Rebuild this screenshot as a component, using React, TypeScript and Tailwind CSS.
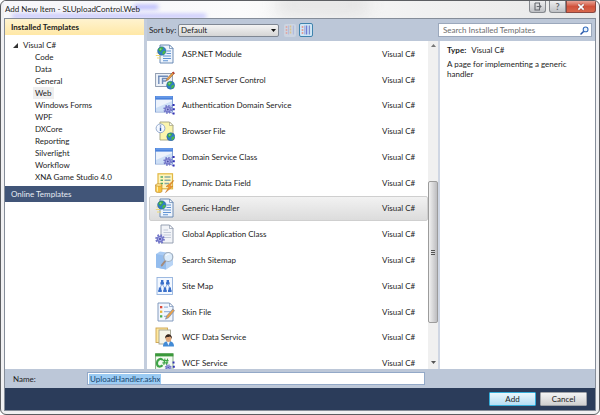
import type { ReactNode } from "react";

type IconKind =
  | "module" | "control" | "service" | "browser" | "field"
  | "app" | "search" | "sitemap" | "skin" | "data" | "wcf";

const templates: { name: string; icon: IconKind; selected?: boolean }[] = [
  { name: "ASP.NET Module", icon: "module" },
  { name: "ASP.NET Server Control", icon: "control" },
  { name: "Authentication Domain Service", icon: "service" },
  { name: "Browser File", icon: "browser" },
  { name: "Domain Service Class", icon: "service" },
  { name: "Dynamic Data Field", icon: "field" },
  { name: "Generic Handler", icon: "module", selected: true },
  { name: "Global Application Class", icon: "app" },
  { name: "Search Sitemap", icon: "search" },
  { name: "Site Map", icon: "sitemap" },
  { name: "Skin File", icon: "skin" },
  { name: "WCF Data Service", icon: "data" },
  { name: "WCF Service", icon: "wcf" },
];

const categories = [
  "Code", "Data", "General", "Web", "Windows Forms", "WPF", "DXCore",
  "Reporting", "Silverlight", "Workflow", "XNA Game Studio 4.0",
];

function Globe({ x, y, r = 4 }: { x: number; y: number; r?: number }) {
  return (
    <g transform={`translate(${x} ${y}) scale(${r / 4})`}>
      <circle r="4" fill="#2f7fc4" stroke="#2a5f96" strokeWidth=".5" />
      <path d="M-3.4-1.6C-2-4 1-4 1.4-2.6C1-1 0-1.2-.6.2C-1.4 1.6-3 .4-3.4-1.6Z" fill="#3fae3c" />
      <path d="M.8.6C2-.6 3.6-.4 3.6.8C3 2.6 1.6 3.6.6 3.2Z" fill="#4dbb45" />
      <circle cx="-1.2" cy="-1.6" r="1" fill="#c8f0d0" opacity=".5" />
    </g>
  );
}

function Page({ x = 5, fill = "#eef4fc", stroke = "#5c7fae" }: { x?: number; fill?: string; stroke?: string }) {
  return (
    <g>
      <path d={`M${x} 1H14.5L18 4.5V19H${x}Z`} fill={fill} stroke={stroke} strokeWidth=".9" />
      <path d="M14.5 1V4.5H18Z" fill="#fff" stroke={stroke} strokeWidth=".7" />
    </g>
  );
}

function Gear({ x, y, r = 4, fill = "#7377c8" }: { x: number; y: number; r?: number; fill?: string }) {
  return (
    <g transform={`translate(${x} ${y}) scale(${r / 4})`}>
      <circle r="3.7" fill="none" stroke={fill} strokeWidth="1.8" strokeDasharray="1.6 1.3" />
      <circle r="3.2" fill={fill} />
      <circle r="1.9" fill="#a9abe8" />
      <circle r="1" fill="#4c4fa4" />
    </g>
  );
}

const drawings: Record<IconKind, ReactNode> = {
  module: (
    <>
      <Page />
      <path d="M11.5 7H16M11.5 9.5H16M8 12H16M8 14.5H16M8 16.7H13" stroke="#5f92d2" strokeWidth="1.1" />
      <path d="M1.5 9H5M.8 11.5H5.5M2 14H6" stroke="#ecd974" strokeWidth="1.2" />
      <Globe x={6.8} y={7} r={4.2} />
    </>
  ),
  control: (
    <>
      <rect x=".6" y="3.5" width="16.8" height="13" fill="#eef2f8" stroke="#8794aa" strokeWidth=".9" />
      <path d="M3 6.2H13M3.8 6V14M7 8.5H12M7 11H11M7.5 8V14" stroke="#6f8bb8" strokeWidth="1.4" fill="none" />
      <path d="M11 11L12.2 8.3L18 2L19.4 3.4L13.6 9.6Z" fill="#e9a24a" stroke="#80502c" strokeWidth=".5" />
      <path d="M17.2 2.8L18.2 1.6L19.8 3L18.8 4.2Z" fill="#b53b35" />
      <Globe x={15.6} y={15.2} r={4} />
    </>
  ),
  service: (
    <>
      <rect x=".5" y="1.5" width="17" height="15.5" fill="#edf3fc" stroke="#7c9cd0" strokeWidth=".9" />
      <path d="M1 13L17 6V16.5H1Z" fill="#cddff6" />
      <rect x=".2" y="1" width="17.6" height="3.6" fill="#4a82dc" />
      <path d="M1 2H17" stroke="#8bb6f5" strokeWidth=".8" />
      <path d="M13 14.5H18.5M15 11.5L18.5 10M15 17L18.5 19" stroke="#8185c8" strokeWidth=".7" />
      <Gear x={12.8} y={14.4} r={3.9} />
      <path d="M17.6 9H19.6V11H17.6ZM17.8 13.3H19.8V15.3H17.8ZM17.6 17.6H19.6V19.6H17.6Z" fill="#3131b5" />
    </>
  ),
  browser: (
    <>
      <Page fill="#fbf5ad" stroke="#a2a17e" />
      <circle cx="5.5" cy="7.3" r="4.4" fill="#f5f9ff" stroke="#8aa2c8" strokeWidth=".9" />
      <path d="M5.5 6.5V10M5.5 4.4V5.5" stroke="#2857a8" strokeWidth="1.4" />
      <Globe x={15.8} y={15.7} r={4} />
    </>
  ),
  field: (
    <>
      <rect x="3" y=".8" width="14.5" height="15" fill="#fff5bd" stroke="#e2b743" strokeWidth="1.2" />
      <path d="M5.5 4H8M5.5 7.3H8M5.5 10.5H8" stroke="#4fa968" strokeWidth="1.6" />
      <path d="M9.5 4H15.5M9.5 7.3H15.5M9.5 10.5H14" stroke="#86aaa5" strokeWidth="1.6" />
      <path d="M18.8 7.4L11 13.6L14 14L10.5 19.6L17.6 13.4L15 12.8Z" fill="#f49a2f" stroke="#bd6b20" strokeWidth=".5" />
      <path d="M.6 12V18.3C.6 20 7 20 7 18.3V12Z" fill="#f6c03f" stroke="#bb8420" strokeWidth=".6" />
      <path d="M2.4 13V18.6" stroke="#fff0a6" strokeWidth="1.2" />
      <ellipse cx="3.8" cy="12" rx="3.2" ry="1.3" fill="#ffe795" stroke="#bb8420" strokeWidth=".6" />
    </>
  ),
  app: (
    <>
      <Page x={6} fill="#f2f4f8" stroke="#8c97aa" />
      <path d="M8.5 6H13M8.5 8.5H16M8.5 11H16M10 13.5H16" stroke="#c3cbd9" strokeWidth="1" />
      <Gear x={5} y={15} r={4.2} />
    </>
  ),
  search: (
    <>
      <path d="M1 4L5 1.5L15 3V16L11 19.5L1 17.5Z" fill="#a9cbf3" />
      <path d="M1 4L11 6V19.5L1 17.5Z" fill="#94bdee" />
      <path d="M11 6L18 3.5V15L11 19.5Z" fill="#b8d4f5" />
      <path d="M10.2 11L6.8 15.4" stroke="#a58b7c" strokeWidth="2" strokeLinecap="round" />
      <circle cx="13.3" cy="7" r="4.5" fill="#dcecfb" stroke="#a1aebd" strokeWidth="1.2" />
      <path d="M10.8 6C11.3 4.5 13 3.9 14.4 4.3" stroke="#fff" fill="none" />
    </>
  ),
  sitemap: (
    <>
      <rect x="2" y="1.5" width="15.5" height="17" fill="#f3f8ff" stroke="#93b2dd" strokeWidth=".9" />
      <path d="M7 8L5 12M7 8L9.7 12M12.7 8L10 12M12.7 8L15 12" stroke="#89a9dc" />
      <path d="M5.4 8.4V6.6L6 6V4H8.4V6L9 6.6V8.4ZM11 8.4V6.6L11.6 6V4H14V6L14.6 6.6V8.4ZM3.2 16V14L3.8 13.4V11.5H6.2V13.4L6.8 14V16ZM8.2 16V14L8.8 13.4V11.5H11.2V13.4L11.8 14V16ZM13 16V14L13.6 13.4V11.5H16V13.4L16.6 14V16Z" fill="#3a70ca" />
    </>
  ),
  skin: (
    <>
      <Page x={3} fill="#f2f6fd" stroke="#7791b8" />
      <path d="M5 4H7.3V6.3H5Z" fill="#d84a3b" />
      <path d="M5 8.6H7.3V10.9H5Z" fill="#eab438" />
      <path d="M5 13.2H7.3V15.5H5Z" fill="#4caf50" />
      <path d="M9 5.2H13M9 9.7H15M9 14.3H13" stroke="#9cb6dc" strokeWidth="1.2" />
      <path d="M10.5 17.2L11.7 13.8L17.8 7L19.5 8.6L13.8 15.6Z" fill="#e9a24a" stroke="#6583b5" strokeWidth=".6" />
    </>
  ),
  data: (
    <>
      <rect x="1" y="1" width="11.5" height="14.5" fill="#ffe9a0" stroke="#cda34c" strokeWidth=".9" />
      <rect x="4" y="3" width="11.5" height="14" fill="#f5f4e9" stroke="#a2a391" strokeWidth=".9" />
      <path d="M8 19.6C8 15.4 10.5 14.3 13.5 14.3S19 15.4 19 19.6Z" fill="#438bd6" />
      <path d="M11.7 14.3H15.1L13.4 18.4Z" fill="#f4f8fc" />
      <ellipse cx="13.5" cy="11.2" rx="2.9" ry="3.7" fill="#dda67c" />
      <path d="M10 11.8C9.6 5.8 17.4 5.7 17 11.8C16.1 11 16.4 9.8 15 9.4C13 10.5 11 9 10 11.8Z" fill="#33261f" />
    </>
  ),
  wcf: (
    <>
      <rect x=".6" y=".8" width="17.4" height="16" fill="#f5fbf2" stroke="#81a97c" strokeWidth=".9" />
      <rect x=".2" y=".4" width="18.2" height="3" fill="#3a993b" />
      <path d="M7.8 7.3C6.4 4.2 1.9 6.6 2 10.4C2.1 14.4 5.4 14.2 7.6 12.2" fill="none" stroke="#3da446" strokeWidth="2.1" />
      <path d="M10 5.6L8.8 11.8M12.6 5.6L11.4 11.8M7.8 7.6H13.6M7.4 9.9H13.2" stroke="#3da446" strokeWidth="1.1" />
      <Gear x={13.2} y={14.6} r={3} />
      <path d="M17.6 8.5H19.5V10.5H17.6ZM17.8 12.8H19.8V14.8H17.8Z" fill="#3131b5" />
    </>
  ),
};

function TemplateIcon({ kind }: { kind: IconKind }) {
  return <svg viewBox="0 0 20 20" className="h-5 w-5 shrink-0" aria-hidden="true">{drawings[kind]}</svg>;
}

function ColumnsIcon({ large = false }: { large?: boolean }) {
  return (
    <svg viewBox="0 0 10 10" className={`h-[10px] w-[10px] shrink-0 ${large ? "" : "opacity-75"}`} aria-hidden="true">
      <path d="M1.5 1V9" stroke="#e59c94" strokeWidth="1.6" strokeDasharray="2 1" />
      <path d="M3.6 .5V9.5" stroke="#a9b3dc" strokeWidth="1" />
      <path d="M5.5 .5V9.5" stroke={large ? "#6f7cd6" : "#e0bd72"} strokeWidth="1.5" strokeDasharray={large ? "10 0" : "2 1"} />
      <path d="M8.4 .5V9.5" stroke={large ? "#7f8cd0" : "#a9b3dc"} strokeWidth="1.3" />
    </svg>
  );
}

function TitleBar() {
  return (
    <header className="relative flex h-[17px] shrink-0 items-start overflow-hidden bg-linear-to-r from-[#f7f7fa] from-15% via-[#fbfbfb] via-40% to-[#e8e8e8]">
      <div className="absolute top-1 left-[130px] h-1 w-6 bg-[#8f90ff] opacity-70 blur-[2px]" />
      <div className="absolute top-[13px] left-2 h-1 w-[194px] bg-[#9c9dff] opacity-60 blur-[2px]" />
      <div className="absolute -top-2 left-[270px] h-6 w-24 rounded-full bg-[#dadada] opacity-60 blur-[8px]" />
      <h1 className="relative flex-1 pl-px text-[8px] leading-[17px]">Add New Item - SLUploadControl.Web</h1>
      <div className="relative flex h-[12px] gap-[3px]">
        <button aria-label="Restore" className="flex w-[17px] items-center justify-center rounded-b-[3px] border border-t-0 border-[#85888d] bg-linear-to-b from-[#eeeeef] to-[#bfc1c5]">
          <svg viewBox="0 0 9 9" className="h-[9px] w-[9px]" aria-hidden="true">
            <path d="M2 1H6.5V2.8M2 1V8H6.5V6.3M3.7 4.5H7.5M6.2 2.8L8 4.5L6.2 6.2" fill="none" stroke="#65686e" strokeWidth="1.1" />
          </svg>
        </button>
        <div className="flex">
          <button aria-label="Help" className="flex w-[17px] items-center justify-center rounded-bl-[3px] border border-t-0 border-[#85888d] bg-linear-to-b from-[#eeeeef] to-[#bfc1c5] text-[9px] leading-none font-bold text-[#65686e]">?</button>
          <button aria-label="Close" className="flex w-[30px] items-center justify-center rounded-br-[3px] border border-t-0 border-[#8b4740] bg-linear-to-b from-[#e8a396] via-[#d0523b] to-[#d8674c]">
            <svg viewBox="0 0 9 9" className="h-2 w-2" aria-hidden="true">
              <path d="M1.5 1.5L7.5 7.5M7.5 1.5L1.5 7.5" stroke="#7c4c4b" strokeWidth="3" />
              <path d="M1.5 1.5L7.5 7.5M7.5 1.5L1.5 7.5" stroke="#fff" strokeWidth="1.8" />
            </svg>
          </button>
        </div>
      </div>
    </header>
  );
}

function Sidebar() {
  return (
    <nav className="flex w-[139px] shrink-0 flex-col bg-white">
      <h2 className="h-4 bg-linear-to-b from-[#fff3cf] to-[#ffe8a6] pl-[6px] text-[8px] leading-4 font-bold">Installed Templates</h2>
      <ul className="h-[151px] pt-1 text-[8px] leading-3">
        <li>
          <div className="flex items-center gap-[5px] pl-2">
            <svg viewBox="0 0 5 5" className="h-[5px] w-[5px]" aria-hidden="true"><path d="M5 0V5H0Z" fill="#333" /></svg>
            Visual C#
          </div>
          <ul className="flex flex-col items-start pl-7">
            {categories.map((name) => (
              <li key={name} className={name === "Web" ? "bg-[#efefef] px-[2px]" : "px-[2px]"}>{name}</li>
            ))}
          </ul>
        </li>
      </ul>
      <h2 className="h-4 bg-[#415578] pl-[6px] text-[8px] leading-4 text-[#e6ebf3]">Online Templates</h2>
    </nav>
  );
}

function Toolbar() {
  return (
    <div className="flex h-[22px] shrink-0 items-center bg-[#bcc7d8] pr-[3px] pl-[2px] text-[8px]">
      <label htmlFor="sort" className="w-[29px] whitespace-nowrap">Sort by:</label>
      <div className="relative w-[101px]">
        <select id="sort" className="block h-[13px] w-full appearance-none rounded-[2px] border border-[#7f8793] bg-linear-to-b from-[#f4f4f4] to-[#d5d5d5] pl-[2px] text-[8px] leading-[10px]">
          <option>Default</option>
        </select>
        <svg viewBox="0 0 5 3" className="pointer-events-none absolute top-[5px] right-[3px] h-[3px] w-[5px]" aria-hidden="true"><path d="M0 0H5L2.5 3Z" fill="#111" /></svg>
      </div>
      <button aria-label="Small icons" className="ml-[5px] flex h-[13px] w-[12px] items-center justify-center rounded-[2px] bg-[#ccd4e1]"><ColumnsIcon /></button>
      <button aria-label="Medium icons" className="ml-[3px] flex h-[14px] w-[14px] items-center justify-center rounded-[2px] border border-[#3f83ad] bg-[#cfe6f5]"><ColumnsIcon large /></button>
      <div className="ml-auto flex h-[14px] w-[154px] items-center border border-[#9ba8bc] bg-white pr-[2px] pl-1">
        <input aria-label="Search Installed Templates" placeholder="Search Installed Templates" className="min-w-0 flex-1 text-[8px] leading-3 outline-none placeholder:text-[#6d6d6d]" />
        <svg viewBox="0 0 9 9" className="h-[9px] w-[9px]" aria-hidden="true">
          <path d="M3.8 5.2L1 8" stroke="#2553a5" strokeWidth="1.5" strokeLinecap="round" />
          <circle cx="5.6" cy="3.4" r="2.4" fill="#e8f3fd" stroke="#3a6fbd" strokeWidth="1.1" />
        </svg>
      </div>
    </div>
  );
}

function TemplateList() {
  return (
    <div className="flex min-w-0 flex-1 bg-white">
      <div className="min-w-0 flex-1 overflow-hidden pl-[2px]">
        <ul className="flex h-[335px] flex-col">
          {templates.map((t) => (
            <li
              key={t.name}
              className={`flex flex-1 items-center border pl-[5px] text-[8px] leading-[10px] ${t.selected ? "rounded-[2px] border-[#cfcfcf] bg-linear-to-b from-[#f2f2f2] to-[#dcdcdc]" : "border-transparent"}`}
            >
              <TemplateIcon kind={t.icon} />
              <span className="flex-1 pl-[7px]">{t.name}</span>
              <span className="w-[45px]">Visual C#</span>
            </li>
          ))}
        </ul>
      </div>
      <div className="flex w-[10px] flex-col items-center bg-[#f0f0f0]">
        <svg viewBox="0 0 5 3" className="mt-[3px] h-[3px] w-[5px]" aria-hidden="true"><path d="M0 3H5L2.5 0Z" fill="#777" /></svg>
        <div className="flex-[134]" />
        <div className="flex w-full flex-[140] flex-col items-center justify-center gap-px rounded-[2px] border border-[#9c9c9c] bg-linear-to-r from-[#f1f1f1] to-[#bdbdc0]">
          <span className="h-px w-1 bg-[#555]" />
          <span className="h-px w-1 bg-[#555]" />
          <span className="h-px w-1 bg-[#555]" />
        </div>
        <div className="flex-[38]" />
        <svg viewBox="0 0 5 3" className="mb-[5px] h-[3px] w-[5px]" aria-hidden="true"><path d="M0 0H5L2.5 3Z" fill="#555" /></svg>
      </div>
    </div>
  );
}

export default function App() {
  return (
    <div className="h-screen bg-white font-['Lato','Open_Sans',sans-serif] text-[#1c1c1c]">
      <main className="flex h-full flex-col overflow-hidden rounded-[6px] border border-[#5c5e62] bg-[#f0f0f2] px-[3px] pb-[3px]">
        <TitleBar />
        <div className="flex min-h-0 flex-1 flex-col border border-[#858d99]">
          <div className="flex min-h-0 flex-1">
            <Sidebar />
            <div className="w-[3px] shrink-0 bg-[#c3cddd]" />
            <div className="flex min-w-0 flex-1 flex-col">
              <Toolbar />
              <div className="flex min-h-0 flex-1">
                <TemplateList />
                <div className="w-[2px] bg-[#cfd6e3]" />
                <section className="w-[155px] shrink-0 bg-white px-[7px] pt-1 text-[8px]">
                  <p className="leading-[10px]"><strong className="mr-[5px]">Type:</strong>Visual C#</p>
                  <p className="mt-1 leading-[10px]">A page for implementing a generic handler</p>
                </section>
              </div>
            </div>
          </div>
          <div className="flex h-[19px] shrink-0 items-center bg-[#bcc7d8] pl-2 text-[8px]">
            <label htmlFor="name" className="w-[74px]">Name:</label>
            <div className="flex h-[13px] w-[338px] items-center border border-[#93a9c8] bg-white pl-px">
              <input id="name" defaultValue="UploadHandler.ashx" className="field-sizing-content bg-[#9bcbf3] px-px text-[8px] leading-[10px] text-[#17456e] outline-none" />
            </div>
          </div>
          <footer className="flex h-[22px] shrink-0 items-center justify-end gap-1 bg-[#2b3c5a] pr-2 text-[8px]">
            <button className="h-[14px] w-[47px] rounded-[1px] border border-[#36aeda] bg-linear-to-b from-[#eaf7fd] to-[#b5def4] leading-3">Add</button>
            <button className="h-[14px] w-[47px] rounded-[1px] border border-[#a0a3a8] bg-linear-to-b from-[#f4f4f4] to-[#d0d0d0] leading-3">Cancel</button>
          </footer>
        </div>
      </main>
    </div>
  );
}
